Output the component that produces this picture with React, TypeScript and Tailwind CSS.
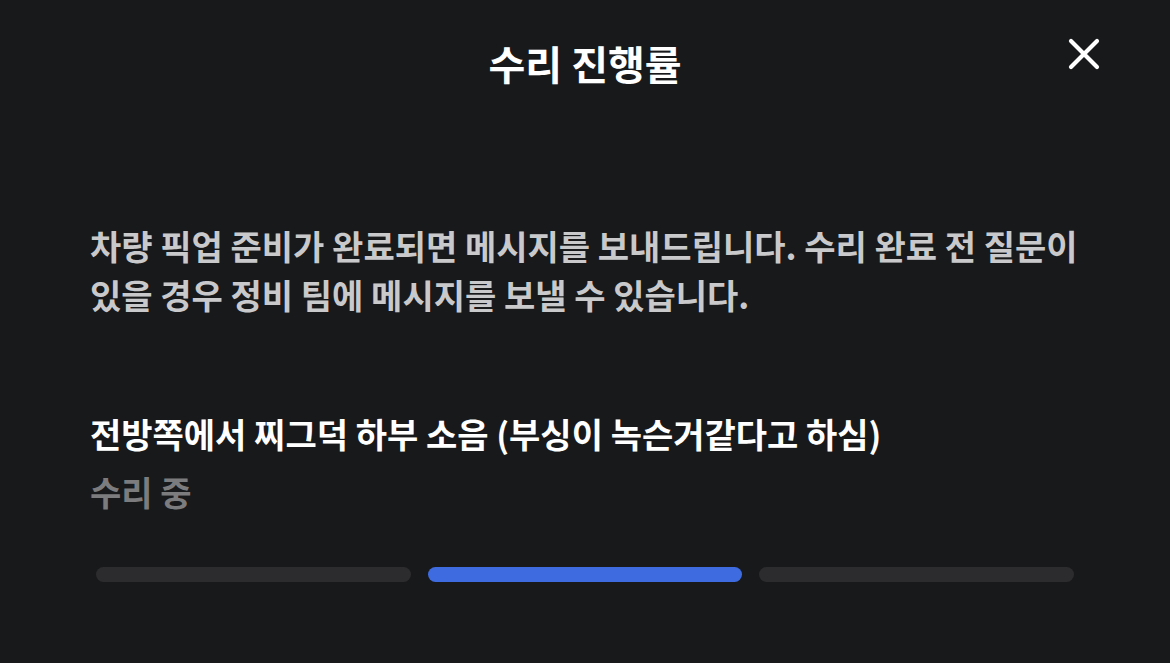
const steps = [false, true, false];

export default function App() {
  return (
    <div
      className="flex h-[663px] w-[1170px] flex-col bg-[#18191b] text-white"
      style={{ fontFamily: '"Noto Sans CJK KR", "Noto Sans", sans-serif' }}
    >
      {/* header */}
      <header className="relative flex h-[130px] items-start justify-center pt-[37px]">
        <h1 className="text-[40px] font-bold leading-[52px]">수리 진행률</h1>
        <button className="absolute right-[70px] top-[38px] text-white">
          <svg width="32" height="32" viewBox="0 0 32 32" fill="none">
            <path
              d="M3 3L29 29M29 3L3 29"
              stroke="currentColor"
              strokeWidth="4.2"
              strokeLinecap="round"
            />
          </svg>
        </button>
      </header>

      <div className="flex flex-col px-[90px] pt-[91px]">
        <p className="text-[34px] font-semibold leading-[49px] text-[#c9c9cb]">
          차량 픽업 준비가 완료되면 메시지를 보내드립니다. 수리 완료 전 질문이
          있을 경우 정비 팀에 메시지를 보낼 수 있습니다.
        </p>

        <div className="mt-[93px] flex flex-col">
          <h2 className="text-[34px] font-bold leading-[44px] text-white">
            전방쪽에서 찌그덕 하부 소음 (부싱이 녹슨거같다고 하심)
          </h2>
          <span className="mt-[14px] text-[34px] font-semibold leading-[44px] text-[#7c7c7e]">
            수리 중
          </span>
        </div>

        <div className="mt-[53px] grid grid-cols-3 gap-[17px] px-[6px]">
          {steps.map((active, i) => (
            <div
              key={i}
              className={
                active
                  ? "h-[15px] rounded-full bg-[#3e6ce0]"
                  : "h-[15px] rounded-full bg-[#2c2c2e]"
              }
            />
          ))}
        </div>
      </div>
    </div>
  );
}
